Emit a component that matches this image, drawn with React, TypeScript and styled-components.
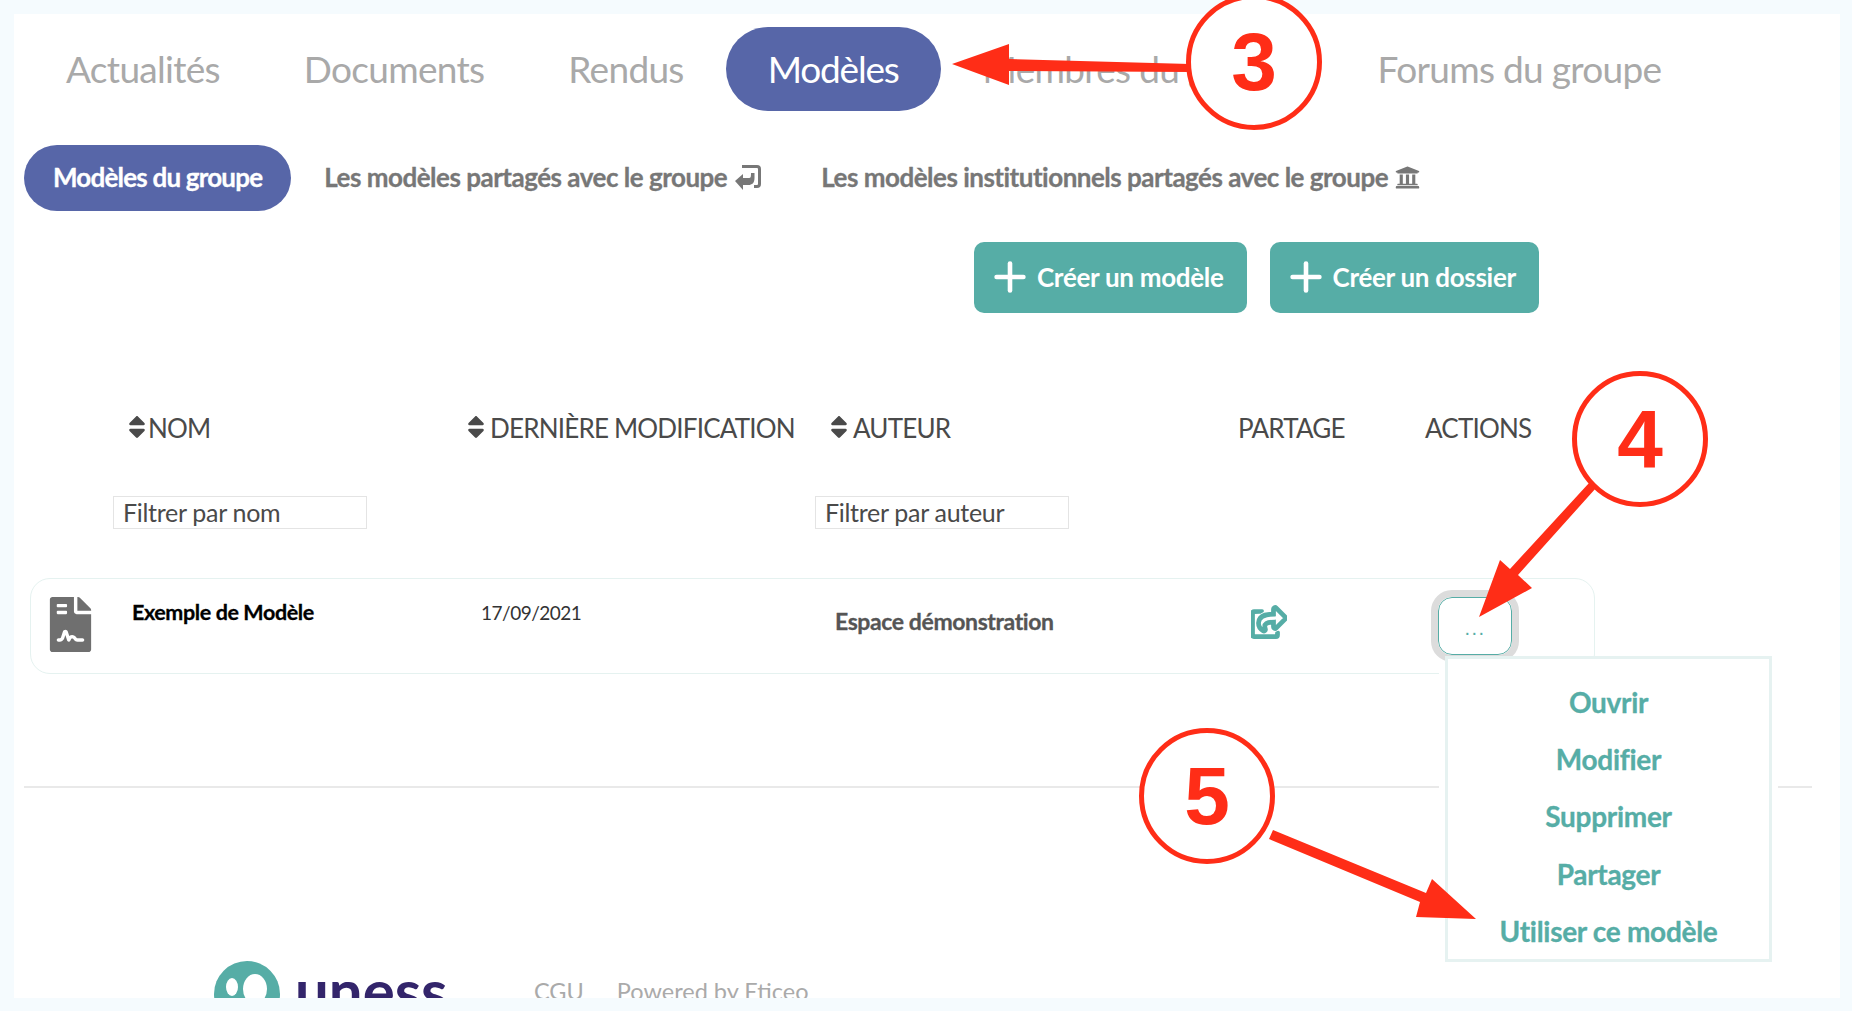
import styled, { createGlobalStyle } from "styled-components";
import { Plus } from "lucide-react";
import { FaFileContract, FaRegShareSquare, FaSort, FaUniversity } from "react-icons/fa";

const TEAL = "#56ada6";
const INDIGO = "#5766a8";
const RED = "#ff2d17";
const FONT = `Lato, "Noto Sans", sans-serif`;

const GlobalStyle = createGlobalStyle`
  html, body {
    margin: 0;
    height: 100%;
    overflow: hidden;
    background: #f5fbfe;
    font-family: ${FONT};
  }
`;

export default function App() {
  return (
    <Page>
      <GlobalStyle />
      <Panel>
        <Tabs>
          <Tab>Actualités</Tab>
          <Tab>Documents</Tab>
          <Tab>Rendus</Tab>
          <Tab $active>Modèles</Tab>
          <Tab>Membres du groupe</Tab>
          <Tab $last>Forums du groupe</Tab>
        </Tabs>

        <SubTabs>
          <SubTab $active>Modèles du groupe</SubTab>
          <SubTab>
            Les modèles partagés avec le groupe
            <ReturnIcon />
          </SubTab>
          <SubTab $third>
            Les modèles institutionnels partagés avec le groupe
            <FaUniversity size={25} />
          </SubTab>
        </SubTabs>

        <Toolbar>
          <CreateButton>
            <Plus size={46} strokeWidth={2.4} />
            Créer un modèle
          </CreateButton>
          <CreateButton>
            <Plus size={46} strokeWidth={2.4} />
            Créer un dossier
          </CreateButton>
        </Toolbar>

        <HeaderRow>
          <HeaderCell>
            <FaSort size={28} />
            NOM
          </HeaderCell>
          <HeaderCell $gap>
            <FaSort size={28} />
            DERNIÈRE MODIFICATION
          </HeaderCell>
          <HeaderCell $gap>
            <FaSort size={28} />
            AUTEUR
          </HeaderCell>
          <HeaderCell>PARTAGE</HeaderCell>
          <HeaderCell>ACTIONS</HeaderCell>
        </HeaderRow>

        <FilterRow>
          <FilterInput placeholder="Filtrer par nom" />
          <FilterInput placeholder="Filtrer par auteur" />
        </FilterRow>

        <ModelCard>
          <FileBadge>
            <FaFileContract size={55} />
          </FileBadge>
          <ModelName>Exemple de Modèle</ModelName>
          <ModelDate>17/09/2021</ModelDate>
          <ModelAuthor>Espace démonstration</ModelAuthor>
          <ShareCell>
            <FaRegShareSquare size={36} stroke="currentColor" strokeWidth={28} />
          </ShareCell>
          <ActionsCell>
            <DotsButton>...</DotsButton>
            <ActionsMenu>
              <MenuItem>Ouvrir</MenuItem>
              <MenuItem>Modifier</MenuItem>
              <MenuItem>Supprimer</MenuItem>
              <MenuItem>Partager</MenuItem>
              <MenuItem>Utiliser ce modèle</MenuItem>
            </ActionsMenu>
          </ActionsCell>
        </ModelCard>

        <Rule />

        <Footer>
          <Logo>
            <LogoMark />
            <LogoWord>uness</LogoWord>
          </Logo>
          <FooterLink>CGU</FooterLink>
          <FooterLink>Powered by Eticeo</FooterLink>
        </Footer>
      </Panel>

      <Callout $x={1186} $y={-6}>3</Callout>
      <Callout $x={1572} $y={371}>4</Callout>
      <Callout $x={1139} $y={728}>5</Callout>

      <Arrows viewBox="0 0 1852 1011">
        <polygon points="952,64 1009,44 1009,59 1190,64 1190,72 1009,71 1009,85" fill={RED} />
        <polygon points="1589,483 1596,488 1518,575 1532,588 1479,617 1500,560 1510,569" fill={RED} />
        <polygon points="1273,830 1269,839 1420,902 1416,917 1476,919 1432,879 1426,893" fill={RED} />
      </Arrows>
    </Page>
  );
}

function ReturnIcon() {
  return (
    <svg width="28" height="26" viewBox="0 0 28 26" fill="#777">
      <path d="M8 1h15a4 4 0 0 1 4 4v15a4 4 0 0 1-4 4h-3v-3h3a1 1 0 0 0 1-1V5a1 1 0 0 0-1-1H8z" />
      <path d="M1 17l8-7v4h6c2 0 2-2 2-5h3.500v5c0 5-2.500 7-6 7H9v5z" />
    </svg>
  );
}

function LogoMark() {
  return (
    <svg width="66" height="66" viewBox="0 0 66 66">
      <circle cx="33" cy="33" r="33" fill={TEAL} />
      <ellipse cx="18" cy="26" rx="6" ry="9" fill="#fff" />
      <ellipse cx="41" cy="28" rx="12" ry="15" fill="#fff" />
    </svg>
  );
}

const Page = styled.div`
  position: relative;
  width: 1852px;
  height: 1011px;
  overflow: hidden;
  padding: 14px 12px 13px 14px;
  box-sizing: border-box;
`;

const Panel = styled.main`
  height: 984px;
  overflow: hidden;
  background: #fff;
  box-sizing: border-box;
  padding: 13px 0 0 10px;
`;

const Tabs = styled.nav`
  display: flex;
  height: 84px;
`;

const Tab = styled.div<{ $active?: boolean; $last?: boolean }>`
  display: flex;
  align-items: center;
  padding: 0 42px 2px;
  margin-left: ${(p) => (p.$last ? "-4px" : "0")};
  border-radius: 42px;
  font-size: 37px;
  letter-spacing: ${(p) => (p.$active ? "-1.2px" : "-0.7px")};
  white-space: nowrap;
  color: ${(p) => (p.$active ? "#fff" : "#a9a9a9")};
  background: ${(p) => (p.$active ? INDIGO : "transparent")};
`;

const SubTabs = styled.div`
  display: flex;
  margin-top: 34px;
  height: 66px;
`;

const SubTab = styled.div<{ $active?: boolean; $third?: boolean }>`
  display: flex;
  align-items: center;
  gap: 7px;
  padding: 0 ${(p) => (p.$active ? "29px" : "33px")} 2px;
  margin-left: ${(p) => (p.$third ? "-7px" : "0")};
  border-radius: 33px;
  font-size: 26px;
  font-weight: 700;
  letter-spacing: ${(p) => (p.$active ? "-0.8px" : "-0.5px")};
  -webkit-text-stroke: 0.3px currentColor;
  white-space: nowrap;
  color: ${(p) => (p.$active ? "#fff" : "#777")};
  background: ${(p) => (p.$active ? INDIGO : "transparent")};
  svg {
    flex: none;
  }
`;

const Toolbar = styled.div`
  display: flex;
  gap: 23px;
  margin: 31px 0 0 950px;
`;

const CreateButton = styled.button`
  display: flex;
  align-items: center;
  gap: 14px;
  height: 71px;
  padding: 0 23px 2px;
  border: none;
  border-radius: 10px;
  background: ${TEAL};
  color: #fff;
  font-family: ${FONT};
  font-size: 26px;
  font-weight: 700;
  letter-spacing: -0.3px;
  white-space: nowrap;
  svg {
    margin: 0 -10px;
  }
`;

const HeaderRow = styled.div`
  display: grid;
  grid-template-columns: 339px 363px 408px 187px 1fr;
  margin: 87px 0 0 104px;
  height: 55px;
  align-items: center;
`;

const HeaderCell = styled.div<{ $gap?: boolean }>`
  display: flex;
  align-items: center;
  gap: ${(p) => (p.$gap ? "5px" : "2px")};
  font-size: 26px;
  letter-spacing: -0.8px;
  color: #4a4a4a;
  white-space: nowrap;
  svg {
    margin: -2px -5px 0;
  }
`;

const FilterRow = styled.div`
  display: flex;
  gap: 448px;
  margin: 41px 0 0 89px;
`;

const FilterInput = styled.input`
  width: 254px;
  height: 33px;
  box-sizing: border-box;
  padding: 0 9px 2px;
  border: 1px solid #e4e4e4;
  font-family: ${FONT};
  font-size: 25px;
  letter-spacing: -0.3px;
  outline: none;
  &::placeholder {
    color: #4a4a4a;
    opacity: 1;
  }
`;

const ModelCard = styled.div`
  display: grid;
  grid-template-columns: 101px 349px 354px 416px 188px 1fr;
  align-items: center;
  width: 1565px;
  height: 96px;
  margin: 49px 0 0 6px;
  box-sizing: border-box;
  border: 1px solid #e5f2f0;
  border-radius: 20px;
`;

const FileBadge = styled.div`
  display: flex;
  margin-top: -4px;
  padding-left: 12px;
  color: #6f6f6f;
`;

const ModelName = styled.div`
  margin-top: -28px;
  font-size: 21.5px;
  font-weight: 700;
  letter-spacing: -0.4px;
  -webkit-text-stroke: 0.3px currentColor;
  color: #000;
`;

const ModelDate = styled.div`
  margin-top: -27px;
  font-size: 19px;
  letter-spacing: -0.5px;
  color: #333;
`;

const ModelAuthor = styled.div`
  margin-top: -10px;
  font-size: 23px;
  font-weight: 700;
  letter-spacing: -0.4px;
  -webkit-text-stroke: 0.3px currentColor;
  color: #555;
`;

const ShareCell = styled.div`
  display: flex;
  color: ${TEAL};
  margin-top: -8px;
`;

const ActionsCell = styled.div`
  position: relative;
  align-self: start;
  margin-top: 18px;
`;

const DotsButton = styled.button`
  display: block;
  width: 74px;
  height: 58px;
  margin-left: -1px;
  border: 1px solid ${TEAL};
  border-radius: 14px;
  outline: 7px solid #dcdcdc;
  background: #fff;
  color: ${TEAL};
  font-size: 20px;
  letter-spacing: 1.5px;
  padding-top: 6px;
`;

const ActionsMenu = styled.div`
  position: absolute;
  top: 59px;
  left: 6px;
  width: 327px;
  height: 306px;
  box-sizing: border-box;
  padding-top: 14px;
  border: 3px solid #e6f2f1;
  background: #fff;
  box-shadow: -6px 6px 0 #fff, 6px 6px 0 #fff;
  display: flex;
  flex-direction: column;
  z-index: 2;
`;

const MenuItem = styled.a`
  flex: none;
  height: 57.3px;
  display: flex;
  align-items: center;
  justify-content: center;
  font-size: 28px;
  font-weight: 700;
  letter-spacing: -0.3px;
  -webkit-text-stroke: 0.3px currentColor;
  color: ${TEAL};
`;

const Rule = styled.hr`
  margin: 112px 28px 0 0;
  border: none;
  border-top: 2px solid #e9e9e9;
`;

const Footer = styled.footer`
  display: flex;
  align-items: flex-start;
  margin: 173px 0 0 190px;
`;

const Logo = styled.div`
  display: flex;
  gap: 15px;
  width: 320px;
`;

const LogoWord = styled.span`
  font-size: 60px;
  font-weight: 700;
  line-height: 1;
  margin-top: -1px;
  color: #33256b;
`;

const FooterLink = styled.span`
  margin: 16px 33px 0 0;
  font-size: 23.5px;
  color: #aaa;
`;

const Callout = styled.div<{ $x: number; $y: number }>`
  position: absolute;
  left: ${(p) => p.$x}px;
  top: ${(p) => p.$y}px;
  z-index: 5;
  width: 136px;
  height: 136px;
  box-sizing: border-box;
  display: flex;
  align-items: center;
  justify-content: center;
  border: 5px solid ${RED};
  border-radius: 50%;
  background: #fff;
  color: ${RED};
  font-family: "Liberation Sans", Arial, sans-serif;
  font-size: 82px;
  font-weight: 700;
`;

const Arrows = styled.svg`
  position: absolute;
  left: 0;
  top: 0;
  z-index: 5;
  width: 1852px;
  height: 1011px;
  pointer-events: none;
`;
